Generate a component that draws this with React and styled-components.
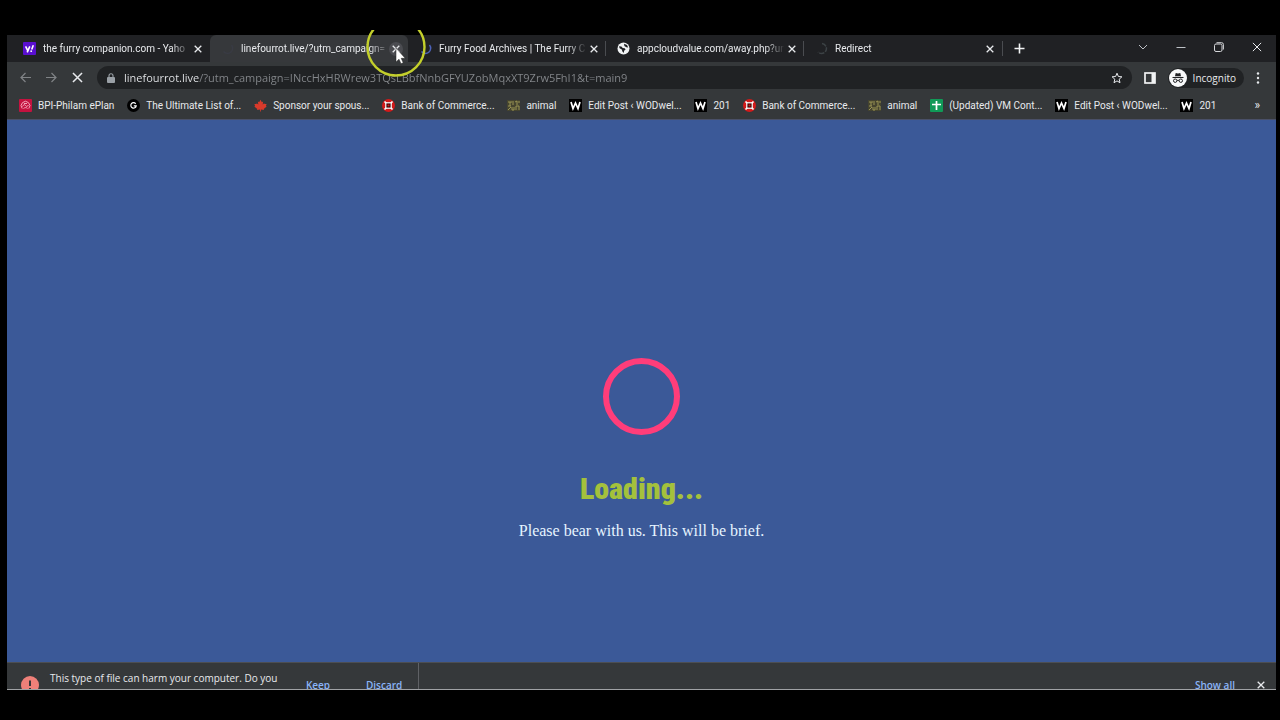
import React from 'react';
import styled, { createGlobalStyle } from 'styled-components';

const GlobalStyle = createGlobalStyle`
  * {
    box-sizing: border-box;
  }
  body {
    margin: 0;
    background: #000;
    color: #e8eaed;
    font-family: 'Open Sans', 'Noto Sans', sans-serif;
    font-size: 10px;
  }
  button, input {
    font: inherit;
    color: inherit;
    border: 0;
    padding: 0;
    background: none;
  }
  svg {
    display: block;
    flex: none;
  }
`;

//icons
const CrossIcon = ({ size = 8, width = 1.3 }) => (
  <svg width={size} height={size} viewBox="0 0 8 8" stroke="currentColor" strokeWidth={width}>
    <path d="M.7.7l6.6 6.6M7.3.7L.7 7.3" />
  </svg>
);

const YahooIcon = () => (
  <svg width="13" height="13" viewBox="0 0 13 13">
    <rect width="13" height="13" rx="1" fill="#5a0fd0" />
    <path d="M2.6 4.4l2 4M6.8 4.4L4.2 10.4M8.7 7.6l1.6-4.4" stroke="#fff" strokeWidth="1.6" fill="none" />
    <circle cx="8.2" cy="9.2" r=".9" fill="#fff" />
  </svg>
);

const SpinnerIcon = ({ color, full }) => (
  <svg width="13" height="13" viewBox="0 0 13 13" fill="none" stroke={color} strokeWidth="1.5">
    {full
      ? <path d="M7 1.5a5 5 0 1 1-4 8.6" strokeDasharray="5 1" />
      : <path d="M10.5 3a5 5 0 0 1-8 6.5" />}
  </svg>
);

const GlobeIcon = () => (
  <svg width="13" height="13" viewBox="0 0 13 13">
    <circle cx="6.5" cy="6.5" r="6" fill="#f1f3f4" />
    <path d="M2 4.200l2.400.3 1.300 1.500 2 .2.900 1.300-1.500 1.200-.3 2.300-1.400-1.500-.6-1.900L2.600 6.300zM7 1.700l3 1.200 1.200 2.600-1.900-.3L7.400 4z" fill="#202124" />
  </svg>
);

const BpiIcon = () => (
  <svg width="13" height="13" viewBox="0 0 13 13" fill="none" stroke="#f7b6c6" strokeWidth=".9">
    <rect width="13" height="13" rx="1" fill="#c4123f" stroke="none" />
    <path d="M3.2 9.500a4.300 4.300 0 1 1 6.600 0" />
    <path d="M3.500 7.500c1-2 2-2.500 3-1s2 1 3-.5M5 4.500h3M4.500 9.500c1.500-1.200 2.800-1.200 4 0" />
  </svg>
);

const GIcon = () => (
  <svg width="13" height="13" viewBox="0 0 13 13" fill="none">
    <circle cx="6.5" cy="6.5" r="6.5" fill="#000" />
    <path d="M8.700 4.800A2.700 2.700 0 1 0 9.200 6.900H6.800" stroke="#fff" strokeWidth="1.200" />
  </svg>
);

const MapleIcon = () => (
  <svg width="13" height="13" viewBox="0 0 13 13">
    <path d="M6.500.8l1.300 2.400 1.300-.6-.4 3 1.500-1.400.4.900 2-.2-.7 2 .8.700-3 2.300.3 1.100-3.100-.4v1.800h-.8v-1.800L3 11l.3-1.100L.3 7.600l.8-.7-.7-2 2 .2.400-.9 1.500 1.400-.4-3 1.300.6z" fill="#d93a2b" />
  </svg>
);

const BankIcon = () => (
  <svg width="13" height="13" viewBox="0 0 13 13">
    <circle cx="6.5" cy="6.5" r="6.5" fill="#d31a1a" />
    <path d="M2.500 2.500l8 8M10.500 2.500l-8 8" stroke="#fff" strokeWidth="1.700" />
    <rect x="3.800" y="3.800" width="5.400" height="5.400" fill="#300" stroke="#fff" strokeWidth="1.200" />
    <rect x="5.500" y="5.500" width="2" height="2" fill="#d31a1a" />
  </svg>
);

const AnimalIcon = () => (
  <svg width="13" height="13" viewBox="0 0 13 13" fill="none">
    <rect y="1" width="13" height="11" fill="#45442f" />
    <path d="M1 3h4M3 3v4M1 7h3M6 2v4M8 3l2-1v4M1 11l3-3M5 8v3h2V8M9 11V7h3v4M11 3h2" stroke="#9a9455" />
  </svg>
);

const WIcon = () => (
  <svg width="13" height="13" viewBox="0 0 13 13" fill="none">
    <rect width="13" height="13" fill="#000" />
    <path d="M2 3l2 6.500L6.500 4 9 9.500 11 3" stroke="#fff" strokeWidth="1.700" />
  </svg>
);

const SheetIcon = () => (
  <svg width="13" height="13" viewBox="0 0 13 13">
    <rect width="13" height="13" rx="1" fill="#109a57" />
    <path d="M6.500 2v9M2 5.500h9" stroke="#fff" strokeWidth="1.700" />
  </svg>
);

const ArrowIcon = ({ back }) => (
  <svg width="11" height="11" viewBox="0 0 11 11" fill="none" stroke="#808386" strokeWidth="1.200">
    {back ? <path d="M11 5.500H1M5.500 1L1 5.500 5.500 10" /> : <path d="M0 5.500h10M5.500 1L10 5.500 5.500 10" />}
  </svg>
);

const LockIcon = () => (
  <svg width="8" height="10" viewBox="0 0 8 10">
    <rect y="4" width="8" height="6" rx="1" fill="#9aa0a6" />
    <path d="M2 4.500V2.800a2 2 0 0 1 4 0v1.700" fill="none" stroke="#9aa0a6" strokeWidth="1.100" />
  </svg>
);

const StarIcon = () => (
  <svg width="12" height="12" viewBox="0 0 12 12" fill="none" stroke="#e8eaed">
    <path d="M6 1.200l1.400 3.300 3.500.3-2.700 2.400.8 3.500L6 8.900l-3 1.800.8-3.500L1.100 4.800l3.500-.3z" />
  </svg>
);

const PanelIcon = () => (
  <svg width="12" height="12" viewBox="0 0 12 12" fill="none">
    <rect x="1" y="1" width="10" height="10" stroke="#f1f3f4" strokeWidth="1.700" />
    <rect x="7.500" y="1" width="3.500" height="10" fill="#f1f3f4" />
  </svg>
);

const IncognitoIcon = () => (
  <svg width="18" height="18" viewBox="0 0 18 18" fill="none">
    <circle cx="9" cy="9" r="9" fill="#f8f9fa" />
    <path d="M6 7.300l.7-3.300 2.300.5L11.300 4l.7 3.300z" fill="#202124" />
    <path d="M3.500 8.500h11" stroke="#202124" strokeWidth="1.100" />
    <g stroke="#202124">
      <circle cx="6.200" cy="11.700" r="1.700" />
      <circle cx="11.800" cy="11.700" r="1.700" />
      <path d="M7.900 11.500q1.100-.6 2.200 0" />
    </g>
  </svg>
);

const MenuIcon = () => (
  <svg width="4" height="12" viewBox="0 0 4 12" fill="#e8eaed">
    <circle cx="2" cy="1.500" r="1.200" />
    <circle cx="2" cy="6" r="1.200" />
    <circle cx="2" cy="10.500" r="1.200" />
  </svg>
);

const PlusIcon = () => (
  <svg width="11" height="11" viewBox="0 0 11 11" stroke="#f1f3f4" strokeWidth="1.600">
    <path d="M5.500.5v10M.5 5.500h10" />
  </svg>
);

const ChevronIcon = () => (
  <svg width="10" height="10" viewBox="0 0 10 10" fill="none" stroke="#bdc1c6">
    <path d="M1 3l4 4 4-4" />
  </svg>
);

const MinimizeIcon = () => (
  <svg width="10" height="10" viewBox="0 0 10 10" stroke="#bdc1c6">
    <path d="M.5 5.500h9" />
  </svg>
);

const RestoreIcon = () => (
  <svg width="10" height="10" viewBox="0 0 10 10" fill="none" stroke="#d5d7da">
    <rect x=".5" y="2" width="7.500" height="7.500" rx="1.500" />
    <path d="M2.500.7h5A1.800 1.800 0 0 1 9.400 2.500v5" />
  </svg>
);

const WarningIcon = () => (
  <svg width="18" height="18" viewBox="0 0 18 18">
    <circle cx="9" cy="9" r="9" fill="#ee8079" />
    <path d="M9 4.500v5.500M9 12v2" stroke="#35373a" strokeWidth="2" />
  </svg>
);

const PointerIcon = () => (
  <svg width="60" height="50" viewBox="0 0 60 50" fill="none">
    <circle cx="30" cy="17" r="28.500" stroke="#c3cf2b" strokeWidth="2.400" />
    <path d="M30 18v14l3-2.800 2 4.500 2.200-1-2-4.400h4z" fill="#fff" stroke="#222" strokeWidth=".5" />
  </svg>
);

const tabs = [
  { title: 'the furry companion.com - Yaho', icon: <YahooIcon /> },
  { title: 'linefourrot.live/?utm_campaign=', icon: <SpinnerIcon color="#393b44" />, active: true },
  { title: 'Furry Food Archives | The Furry C', icon: <SpinnerIcon color="#4c62b8" /> },
  { title: 'appcloudvalue.com/away.php?ur', icon: <GlobeIcon />, line: true },
  { title: 'Redirect', icon: <SpinnerIcon color="#3c4245" full />, line: true },
];

const bookmarks = [
  { name: 'BPI-Philam ePlan', icon: <BpiIcon /> },
  { name: 'The Ultimate List of...', icon: <GIcon /> },
  { name: 'Sponsor your spous...', icon: <MapleIcon /> },
  { name: 'Bank of Commerce...', icon: <BankIcon /> },
  { name: 'animal', icon: <AnimalIcon /> },
  { name: 'Edit Post ‹ WODwel...', icon: <WIcon /> },
  { name: '201', icon: <WIcon /> },
  { name: 'Bank of Commerce...', icon: <BankIcon /> },
  { name: 'animal', icon: <AnimalIcon /> },
  { name: '(Updated) VM Cont...', icon: <SheetIcon /> },
  { name: 'Edit Post ‹ WODwel...', icon: <WIcon /> },
  { name: '201', icon: <WIcon /> },
];

const App = () => {
  return (
    <STScreen>
      <GlobalStyle />
      <STWindow>
        <STTabStrip>
          {tabs.map((tab) => (
            <STTab key={tab.title} $active={tab.active} $line={tab.line}>
              {tab.icon}
              <STTabTitle>{tab.title}</STTabTitle>
              <STTabClose type="button" aria-label="Close tab" $hover={tab.active}>
                <CrossIcon />
              </STTabClose>
              {tab.active && <STPointer><PointerIcon /></STPointer>}
            </STTab>
          ))}
          <STNewTab type="button" aria-label="New tab"><PlusIcon /></STNewTab>
          <STWindowButtons>
            <STWindowButton type="button" aria-label="Search tabs"><ChevronIcon /></STWindowButton>
            <STWindowButton type="button" aria-label="Minimize"><MinimizeIcon /></STWindowButton>
            <STWindowButton type="button" aria-label="Restore"><RestoreIcon /></STWindowButton>
            <STWindowButton type="button" aria-label="Close"><CrossIcon size={10} width={0.8} /></STWindowButton>
          </STWindowButtons>
        </STTabStrip>

        <STToolbar>
          <STNavButton type="button" aria-label="Back"><ArrowIcon back /></STNavButton>
          <STNavButton type="button" aria-label="Forward"><ArrowIcon /></STNavButton>
          <STNavButton type="button" aria-label="Stop"><CrossIcon size={11} width={1.1} /></STNavButton>
          <STAddressBar>
            <LockIcon />
            <STAddress
              aria-label="Address"
              defaultValue="linefourrot.live/?utm_campaign=INccHxHRWrew3TQsLBbfNnbGFYUZobMqxXT9Zrw5FhI1&t=main9"
            />
            <STIconButton type="button" aria-label="Bookmark this page"><StarIcon /></STIconButton>
          </STAddressBar>
          <STIconButton type="button" aria-label="Side panel"><PanelIcon /></STIconButton>
          <STProfile type="button">
            <IncognitoIcon />
            Incognito
          </STProfile>
          <STIconButton type="button" aria-label="Menu"><MenuIcon /></STIconButton>
        </STToolbar>

        <STBookmarks>
          <STBookmarkList>
            {bookmarks.map((item, i) => (
              <STBookmark href="#" key={i}>
                {item.icon}
                {item.name}
              </STBookmark>
            ))}
          </STBookmarkList>
          <STMore type="button" aria-label="More bookmarks">»</STMore>
        </STBookmarks>

        <STPage>
          <STLoader />
          <STLoading>Loading...</STLoading>
          <STMessage>Please bear with us. This will be brief.</STMessage>
        </STPage>

        <STDownloads>
          <STDownload>
            <WarningIcon />
            <STWarning>This type of file can harm your computer. Do you</STWarning>
            <STDownloadActions>
              <STTextButton type="button">Keep</STTextButton>
              <STTextButton type="button">Discard</STTextButton>
            </STDownloadActions>
          </STDownload>
          <STShowAll>
            <STTextButton type="button">Show all</STTextButton>
            <STIconButton type="button" aria-label="Close downloads"><CrossIcon /></STIconButton>
          </STShowAll>
        </STDownloads>
      </STWindow>
    </STScreen>
  );
};

const STScreen = styled.div`
  display: flex;
  height: 100vh;
  padding: 35px 4px 30px 7px;
`;

const STWindow = styled.div`
  flex: 1;
  min-width: 0;
  display: flex;
  flex-direction: column;
`;

//tabs
const STTabStrip = styled.div`
  display: flex;
  align-items: center;
  height: 27px;
  padding-left: 5px;
  background: #202124;
  font-family: Roboto, 'Open Sans', sans-serif;
`;

const STTab = styled.div`
  position: relative;
  flex: 0 1 198px;
  min-width: 0;
  height: 27px;
  display: flex;
  align-items: center;
  padding: 0 5px 0 11px;
  border-radius: 6px 6px 0 0;
  background: ${(props) => (props.$active ? '#36383b' : 'transparent')};

  &::before {
    content: '';
    position: absolute;
    left: -1px;
    top: 6px;
    width: 1px;
    height: 15px;
    background: ${(props) => (props.$line ? '#4a4c50' : 'transparent')};
  }
`;

const STTabTitle = styled.span`
  flex: 1;
  min-width: 0;
  margin-left: 7px;
  white-space: nowrap;
  mask-image: linear-gradient(to right, #000 calc(100% - 20px), transparent);
`;

const STTabClose = styled.button`
  display: grid;
  place-items: center;
  width: 14px;
  height: 14px;
  border-radius: 50%;
  background: ${(props) => (props.$hover ? '#4b4c51' : 'transparent')};
`;

const STPointer = styled.div`
  position: absolute;
  right: -18px;
  top: -5px;
  z-index: 2;
  pointer-events: none;
`;

const STNewTab = styled.button`
  width: 34px;
  height: 15px;
  display: grid;
  place-items: center;
  border-left: 1px solid #4a4c50;
`;

const STWindowButtons = styled.div`
  display: flex;
  align-self: flex-start;
  margin-left: auto;
`;

const STWindowButton = styled.button`
  display: grid;
  place-items: center;
  width: 38px;
  height: 24px;
`;

//toolbar
const STToolbar = styled.div`
  display: flex;
  align-items: center;
  gap: 12px;
  height: 31px;
  padding: 0 16px 0 12px;
  background: #35383a;
`;

const STNavButton = styled.button`
  display: grid;
  place-items: center;
  width: 12px;
  height: 24px;
  margin-right: 2px;
`;

const STAddressBar = styled.div`
  flex: 1;
  display: flex;
  align-items: center;
  gap: 9px;
  height: 23px;
  padding: 0 9px 0 10px;
  border-radius: 12px;
  background: #202224;
`;

const STAddress = styled.input`
  flex: 1;
  min-width: 0;
  height: 20px;
  font-size: 11px;
  outline: 0;
  color: transparent;
  background: linear-gradient(to right, #e8eaed 75px, #85888c 75px);
  background-clip: text;
`;

const STIconButton = styled.button`
  display: grid;
  place-items: center;
`;

const STProfile = styled.button`
  display: flex;
  align-items: center;
  gap: 6px;
  height: 20px;
  padding: 0 8px 0 1px;
  border-radius: 10px;
  background: #202224;
`;

//bookmarks
const STBookmarks = styled.div`
  display: flex;
  align-items: center;
  gap: 38px;
  height: 27px;
  padding: 0 16px 2px 12px;
  background: #35383a;
  border-bottom: 1px solid #4a5068;
  font-family: Roboto, 'Open Sans', sans-serif;
`;

const STBookmarkList = styled.nav`
  flex: 1;
  display: flex;
  justify-content: space-between;
  white-space: nowrap;
`;

const STBookmark = styled.a`
  display: flex;
  align-items: center;
  gap: 6px;
  color: #e8eaed;
  text-decoration: none;
`;

const STMore = styled.button`
  font-size: 12px;
`;

//page
const STPage = styled.main`
  flex: 1;
  min-height: 0;
  display: flex;
  flex-direction: column;
  align-items: center;
  padding-top: 238px;
  background: #3b5998;
`;

const STLoader = styled.div`
  width: 77px;
  height: 77px;
  border: 6px solid #ff3d7a;
  border-radius: 50%;
`;

const STLoading = styled.h1`
  margin: 36px 0 0;
  font-family: 'Roboto Condensed', Roboto, sans-serif;
  font-size: 30px;
  line-height: 36px;
  font-weight: 900;
  color: #a4c13c;
`;

const STMessage = styled.p`
  margin: 14px 0 0;
  font-family: 'Liberation Serif', serif;
  font-size: 16px;
  line-height: 20px;
  color: #e6f4ff;
`;

//downloads
const STDownloads = styled.div`
  display: flex;
  justify-content: space-between;
  height: 28px;
  overflow: hidden;
  background: #35383a;
  border-top: 1px solid #4c4e52;
  border-bottom: 1px solid #a0a2a5;
`;

const STDownload = styled.div`
  display: flex;
  align-items: center;
  height: 44px;
  padding: 0 8px 0 14px;
  border-right: 1px solid #5f6165;
`;

const STWarning = styled.p`
  width: 240px;
  height: 30px;
  margin: 0 4px 0 11px;
  line-height: 16px;
`;

const STDownloadActions = styled.div`
  display: flex;
  gap: 16px;
`;

const STTextButton = styled.button`
  min-width: 48px;
  padding: 0 8px;
  font-weight: 600;
  color: #8ab4f8;
`;

const STShowAll = styled.div`
  display: flex;
  align-items: center;
  gap: 14px;
  height: 44px;
  padding-right: 11px;
`;

export default App;
